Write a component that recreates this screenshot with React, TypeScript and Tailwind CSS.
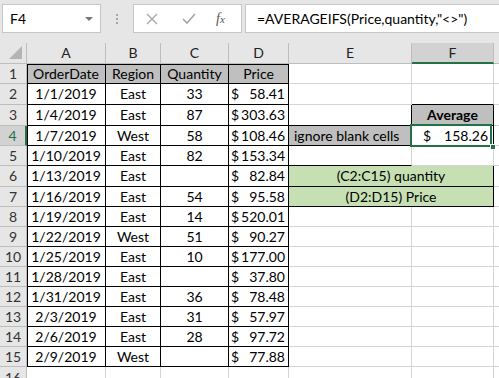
import React from "react";

type Row = { date: string; region: string; qty: string; price: string };

const rows: Row[] = [
	{ date: "1/1/2019", region: "East", qty: "33", price: "58.41" },
	{ date: "1/4/2019", region: "East", qty: "87", price: "303.63" },
	{ date: "1/7/2019", region: "West", qty: "58", price: "108.46" },
	{ date: "1/10/2019", region: "East", qty: "82", price: "153.34" },
	{ date: "1/13/2019", region: "East", qty: "", price: "82.84" },
	{ date: "1/16/2019", region: "East", qty: "54", price: "95.58" },
	{ date: "1/19/2019", region: "East", qty: "14", price: "520.01" },
	{ date: "1/22/2019", region: "West", qty: "51", price: "90.27" },
	{ date: "1/25/2019", region: "East", qty: "10", price: "177.00" },
	{ date: "1/28/2019", region: "East", qty: "", price: "37.80" },
	{ date: "1/31/2019", region: "East", qty: "36", price: "78.48" },
	{ date: "2/3/2019", region: "East", qty: "31", price: "57.97" },
	{ date: "2/6/2019", region: "East", qty: "28", price: "97.72" },
	{ date: "2/9/2019", region: "West", qty: "", price: "77.88" },
];

// row heights mimic Excel's uneven pixel rounding
const heights = [
	"h-[20px]",
	"h-[21px]",
	"h-[21px]",
	"h-[20px]",
	"h-[20px]",
	"h-[21px]",
	"h-[20px]",
	"h-[20px]",
	"h-[20px]",
	"h-[20px]",
	"h-[20px]",
	"h-[20px]",
	"h-[20px]",
	"h-[20px]",
	"h-[20px]",
];

const grid = "border-r border-b border-[#d4d4d4]";
const black = "border-r border-b border-black";

function RowHead({ n, active }: { n: number; active?: boolean }) {
	return (
		<div
			className={
				active
					? "w-[27px] shrink-0 flex items-center justify-center bg-[#d2d2d2] text-[#217346] border-b border-[#bdbdbd] border-r-2 border-r-[#217346]"
					: "w-[27px] shrink-0 flex items-center justify-center bg-[#e6e6e6] text-[#333] border-b border-r border-[#bdbdbd]"
			}
		>
			{n}
		</div>
	);
}

function Price({ v }: { v: string }) {
	return (
		<div className={`w-[60px] shrink-0 flex items-center justify-between pl-[2px] pr-[3px] ${black}`}>
			<span>$</span>
			<span>{v}</span>
		</div>
	);
}

function FormulaBar() {
	return (
		<div className="h-[43px] flex items-start pt-[4px] bg-[#e6e6e6]">
			<div className="ml-[2px] w-[99px] h-[29px] bg-white border border-[#c6c6c6] flex items-center justify-between pl-[7px] pr-[7px] text-[14px]">
				<span>F4</span>
				<span className="w-0 h-0 border-l-[4px] border-r-[4px] border-t-[4px] border-l-transparent border-r-transparent border-t-[#777]" />
			</div>
			<div className="w-[32px] h-[29px] flex flex-col items-center justify-center gap-[2px]">
				<span className="w-[2px] h-[2px] bg-[#a6a6a6]" />
				<span className="w-[2px] h-[2px] bg-[#a6a6a6]" />
				<span className="w-[2px] h-[2px] bg-[#a6a6a6]" />
			</div>
			<div className="w-[109px] h-[29px] bg-white border border-[#c6c6c6] flex items-center">
				<svg width="12" height="12" viewBox="0 0 12 12" className="ml-[12px]">
					<path d="M1 1 L11 11 M11 1 L1 11" stroke="#a6a6a6" strokeWidth="1.4" fill="none" />
				</svg>
				<svg width="14" height="12" viewBox="0 0 14 12" className="ml-[24px]">
					<path d="M1 6 L5 10 L13 1" stroke="#a6a6a6" strokeWidth="1.6" fill="none" />
				</svg>
				<span className="ml-[20px] text-[14px] italic text-[#555] font-['Liberation_Serif',serif]">
					f<span className="text-[11px]">x</span>
				</span>
			</div>
			<div className="ml-[3px] flex-1 h-[29px] bg-white border-y border-l border-[#c6c6c6] flex items-center pl-[11px] text-[14px]">
				=AVERAGEIFS(Price,quantity,"&lt;&gt;")
			</div>
		</div>
	);
}

function ColHeads() {
	const h = "shrink-0 flex items-center justify-center bg-[#e6e6e6] text-[#222] border-r border-b border-[#bdbdbd]";
	return (
		<div className="h-[21px] flex text-[14px]">
			<div className="w-[27px] shrink-0 flex items-end justify-end pr-[4px] pb-[4px] bg-[#e6e6e6] border-r border-b border-[#bdbdbd]">
				<svg width="13" height="13" viewBox="0 0 13 13">
					<path d="M13 0 L13 13 L0 13 Z" fill="#b4b4b4" />
				</svg>
			</div>
			<div className={`w-[79px] ${h}`}>A</div>
			<div className={`w-[55px] ${h}`}>B</div>
			<div className={`w-[68px] ${h}`}>C</div>
			<div className={`w-[60px] ${h}`}>D</div>
			<div className={`w-[123px] ${h}`}>E</div>
			<div className="w-[82px] shrink-0 flex items-center justify-center bg-[#d2d2d2] text-[#222] border-r border-[#bdbdbd] border-b-2 border-b-[#217346]">
				F
			</div>
			<div className="flex-1 bg-[#e6e6e6] border-b border-[#bdbdbd]" />
		</div>
	);
}

function ECell({ r }: { r: number }) {
	if (r === 3)
		return <div className={`w-[123px] shrink-0 ${black}`} />;
	if (r === 4)
		return (
			<div className={`w-[123px] shrink-0 flex items-center pl-[5px] bg-[#bfbfbf] ${black}`}>
				ignore blank cells
			</div>
		);
	if (r === 5) return <div className="w-[123px] shrink-0 border-r border-r-[#d4d4d4] border-b border-b-black" />;
	return <div className={`w-[123px] shrink-0 ${grid}`} />;
}

function FCell({ r }: { r: number }) {
	if (r === 2) return <div className="w-[82px] shrink-0 border-r border-r-[#d4d4d4] border-b border-b-black" />;
	if (r === 3)
		return (
			<div className={`w-[82px] shrink-0 flex items-center justify-center font-bold bg-[#bfbfbf] ${black}`}>
				Average
			</div>
		);
	if (r === 4)
		return (
			<div className={`w-[82px] shrink-0 flex items-center justify-between pl-[11px] pr-[5px] ${black}`}>
				<span>$</span>
				<span>158.26</span>
			</div>
		);
	return <div className={`w-[82px] shrink-0 ${grid}`} />;
}

export default function App() {
	return (
		<div className="w-[499px] h-[378px] overflow-hidden bg-white text-black text-[14px] leading-none font-['Lato','Liberation_Sans',sans-serif] relative">
			<FormulaBar />
			<ColHeads />

			{/* row 1 */}
			<div className={`flex ${heights[0]}`}>
				<div className="w-[27px] shrink-0 flex items-center justify-center bg-[#e6e6e6] text-[#333] border-b border-r border-[#bdbdbd]">
					1
				</div>
				<div className={`w-[79px] shrink-0 flex items-center justify-center bg-[#bfbfbf] shadow-[inset_1px_1px_0_#000] ${black}`}>OrderDate</div>
				<div className={`w-[55px] shrink-0 flex items-center justify-center bg-[#bfbfbf] shadow-[inset_0_1px_0_#000] ${black}`}>Region</div>
				<div className={`w-[68px] shrink-0 flex items-center justify-center bg-[#bfbfbf] shadow-[inset_0_1px_0_#000] ${black}`}>Quantity</div>
				<div className={`w-[60px] shrink-0 flex items-center justify-center bg-[#bfbfbf] shadow-[inset_0_1px_0_#000] ${black}`}>Price</div>
				<div className={`w-[123px] shrink-0 ${grid}`} />
				<div className={`w-[82px] shrink-0 ${grid}`} />
				<div className="flex-1 border-b border-[#d4d4d4]" />
			</div>

			{rows.map((d, i) => {
				const r = i + 2;
				return (
					<div key={r} className={`flex ${heights[i + 1]}`}>
						<RowHead n={r} active={r === 4} />
						<div className={`w-[79px] shrink-0 flex items-center justify-center shadow-[inset_1px_0_0_#000] ${black}`}>{d.date}</div>
						<div className={`w-[55px] shrink-0 flex items-center justify-center ${black}`}>{d.region}</div>
						<div className={`w-[68px] shrink-0 flex items-center justify-center ${black}`}>{d.qty}</div>
						<Price v={d.price} />
						{r === 6 || r === 7 ? (
							<div className={`w-[205px] shrink-0 flex items-center justify-center bg-[#c6e0b4] ${black}`}>
								{r === 6 ? "(C2:C15) quantity" : "(D2:D15) Price"}
							</div>
						) : (
							<>
								<ECell r={r} />
								<FCell r={r} />
							</>
						)}
						<div className="flex-1 border-b border-[#d4d4d4]" />
					</div>
				);
			})}

			{/* row 16, cut off at the window edge */}
			<div className="flex h-[11px]">
				<div className="w-[27px] shrink-0 flex items-start justify-center pt-[4px] bg-[#e6e6e6] text-[#333] border-r border-[#bdbdbd] overflow-hidden">
					16
				</div>
				<div className="w-[79px] shrink-0 border-r border-[#d4d4d4]" />
				<div className="w-[55px] shrink-0 border-r border-[#d4d4d4]" />
				<div className="w-[68px] shrink-0 border-r border-[#d4d4d4]" />
				<div className="w-[60px] shrink-0 border-r border-[#d4d4d4]" />
				<div className="w-[123px] shrink-0 border-r border-[#d4d4d4]" />
				<div className="w-[82px] shrink-0 border-r border-[#d4d4d4]" />
			</div>

			{/* active cell outline on F4 */}
			<div className="absolute left-[410px] top-[124px] w-[82px] h-[23px] border-2 border-[#217346] pointer-events-none" />
			<div className="absolute left-[490px] top-[144px] w-[6px] h-[6px] bg-[#217346] border border-white" />
		</div>
	);
}
